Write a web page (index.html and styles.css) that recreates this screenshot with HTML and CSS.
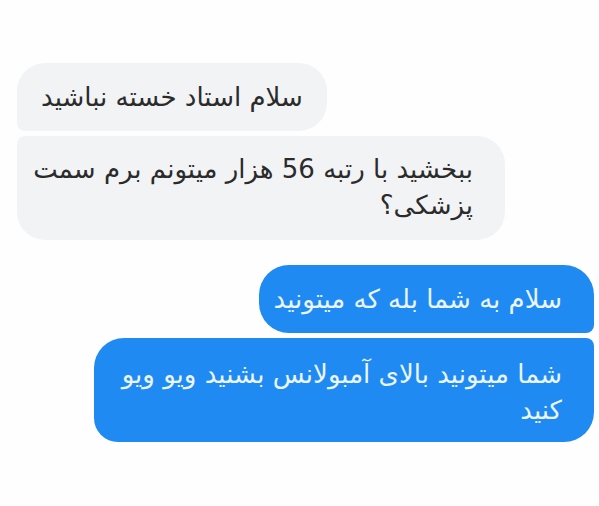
FILE: index.html
```html
<!DOCTYPE html>
<html lang="fa" dir="rtl">
  <head>
    <meta charset="utf-8" />
    <title>Chat</title>
    <link rel="stylesheet" href="styles.css">
  </head>
  <body>
    <div class="chat">
      <!--them-->
      <div class="group them">
        <div class="bubble first">سلام استاد خسته نباشید</div>
        <div class="bubble last">ببخشید با رتبه 56 هزار میتونم برم سمت پزشکی؟</div>
      </div>
      <!--me-->
      <div class="group me">
        <div class="bubble first">سلام به شما بله که میتونید</div>
        <div class="bubble last">شما میتونید بالای آمبولانس بشنید ویو ویو کنید</div>
      </div>
    </div>
  </body>
</html>
```

FILE: styles.css
```css
* {
  padding: 0;
  margin: 0;
  box-sizing: border-box;
}
body {
  background-color: #fefefe;
  font-family: "DejaVu Sans", sans-serif;
  height: 100vh;
}
.chat {
  padding-top: 63px;
  display: flex;
  flex-direction: column;
  gap: 25px;
}
.group {
  display: flex;
  flex-direction: column;
  gap: 5px;
}
.bubble {
  font-size: 26px;
  line-height: 36px;
  padding: 16px 24px;
}

/*them*/
.them {
  align-items: flex-end;
  padding-left: 17px;
}
.them .bubble {
  background-color: #f2f3f5;
  color: #2b2b2b;
  max-width: 488px;
}
.them .first {
  border-radius: 28px 28px 28px 8px;
}
.them .last {
  border-radius: 8px 28px 28px 28px;
  padding: 15px 32px 17px 12px;
}

/*me*/
.me {
  align-items: flex-start;
  padding-right: 5px;
}
.me .bubble {
  background-color: #1f8af2;
  color: #eaf5ff;
  max-width: 500px;
  padding-right: 32px;
}
.me .first {
  border-radius: 30px 30px 8px 30px;
  padding-left: 14px;
}
.me .last {
  border-radius: 30px 8px 30px 24px;
  padding-top: 18px;
  padding-bottom: 14px;
}
```
